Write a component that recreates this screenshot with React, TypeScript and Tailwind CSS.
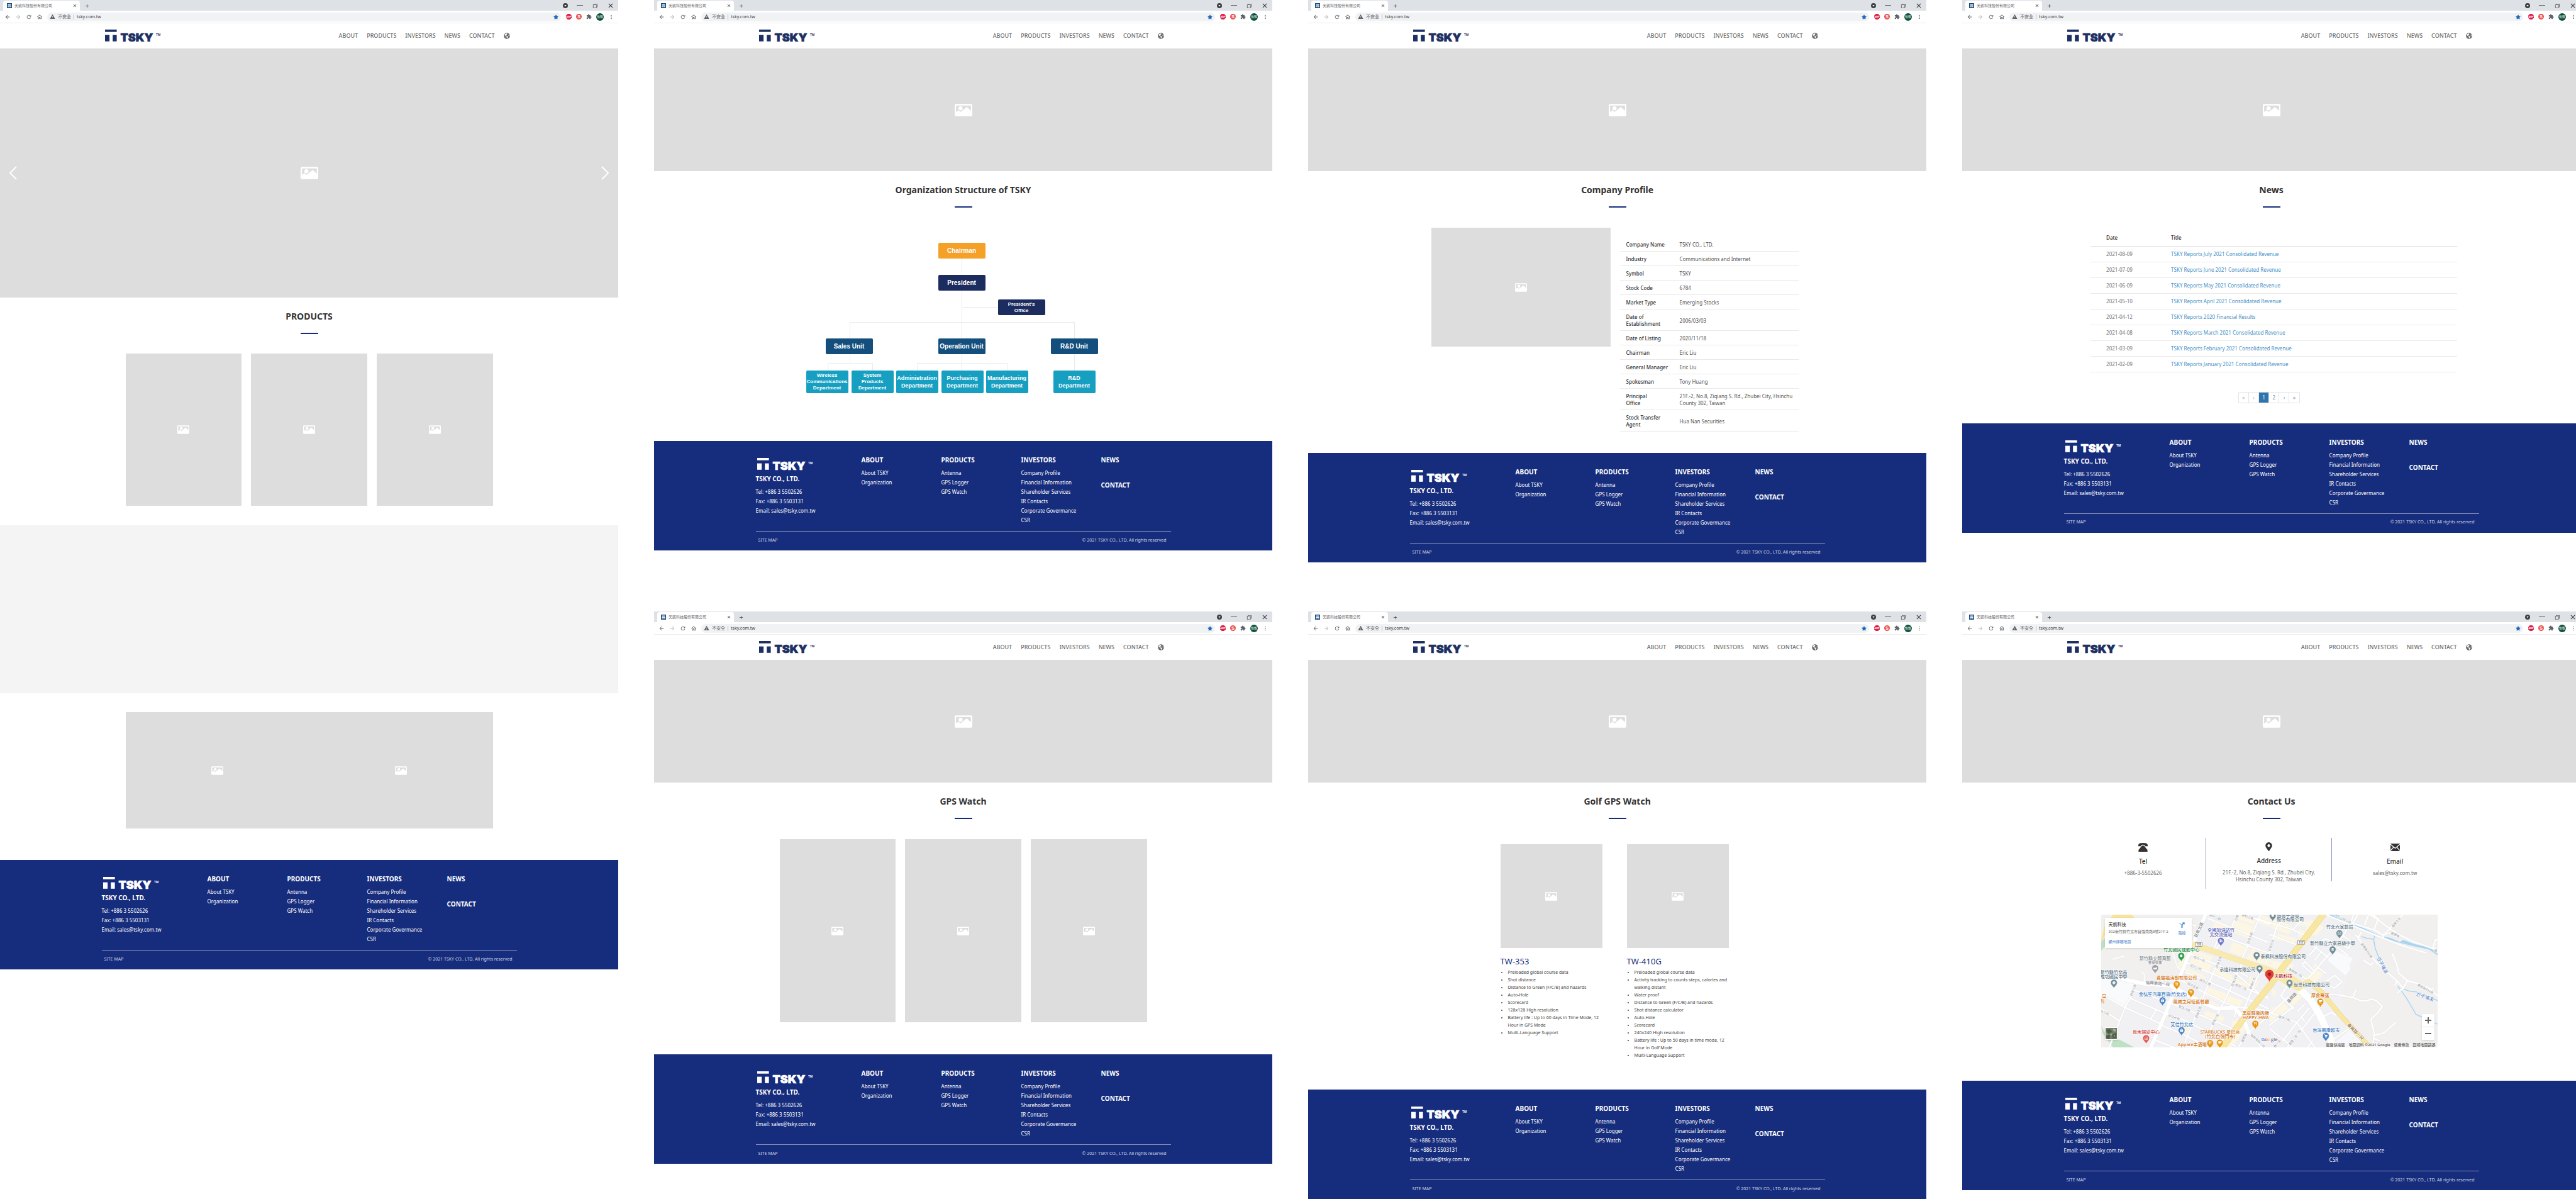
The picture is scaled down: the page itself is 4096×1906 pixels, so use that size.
import type { ReactNode } from "react";
import { FaGlobeAmericas, FaMapMarkerAlt, FaStar } from "react-icons/fa";
import {
  MdArrowBack,
  MdArrowForward,
  MdClose,
  MdExtension,
  MdMoreVert,
  MdOutlineHome,
  MdRefresh,
  MdWarning,
  MdAdd,
} from "react-icons/md";
import { VscChromeRestore } from "react-icons/vsc";

/* ---------- shared drawings ---------- */

function ImageGlyph({ className }: { className: string }) {
  return (
    <svg viewBox="0 0 64 45" className={className} aria-hidden="true">
      <rect width="64" height="45" rx="5" fill="#fff" />
      <path d="M5 8Q5 6 7 6H57Q59 6 59 8V25L44 11L22 29L13 23L5 30Z" fill="#ddd" />
      <circle cx="21" cy="16" r="7.5" fill="#fff" />
    </svg>
  );
}

function Placeholder({ className, large = false }: { className: string; large?: boolean }) {
  return (
    <div className={`flex items-center justify-center bg-[#ddd] ${className}`}>
      <ImageGlyph className={large ? "h-5 w-7" : "h-[14px] w-[19px]"} />
    </div>
  );
}

function Logo({ className }: { className: string }) {
  return (
    <svg viewBox="0 -4 92 28" className={`overflow-visible ${className}`} role="img" aria-label="TSKY">
      <g fill="currentColor">
        <rect x="0" y="0" width="18.6" height="3.7" />
        <rect x="0" y="8.6" width="7.1" height="10.2" />
        <rect x="12.2" y="8.6" width="6.4" height="10.2" />
        <text
          x="24.5"
          y="18.6"
          fontFamily="Inter, 'Liberation Sans', sans-serif"
          fontWeight="900"
          fontSize="18"
          stroke="currentColor"
          strokeWidth="0.7"
        >
          TSKY
        </text>
        <text x="81" y="10" fontFamily="'Liberation Sans', sans-serif" fontWeight="700" fontSize="5">
          TM
        </text>
      </g>
    </svg>
  );
}

/* ---------- browser window ---------- */

function Favicon() {
  return (
    <svg viewBox="0 0 16 16" className="size-2 shrink-0" aria-hidden="true">
      <rect width="16" height="16" fill="#174a7c" />
      <path d="M3 3H13V5.4H3ZM3 7H13V13H10.6V9.4H9V13H7V9.4H5.4V13H3Z" fill="#fff" />
    </svg>
  );
}

function BrowserBar() {
  return (
    <div className="text-[#5f6368]">
      <div className="flex h-[17px] items-end bg-[#dee1e6]">
        <div className="ml-[5px] flex h-4 w-[122px] items-center rounded-t-[4px] bg-white pr-1 pl-[6px]">
          <Favicon />
          <span className="ml-1 text-[6px] leading-4">天凱科技股份有限公司</span>
          <button type="button" aria-label="Close tab" className="ml-auto text-[#3c4043]">
            <MdClose className="size-2" />
          </button>
        </div>
        <button type="button" aria-label="New tab" className="flex h-4 w-[23px] items-center justify-center text-[#3c4043]">
          <MdAdd className="size-[9px]" />
        </button>
        <div className="ml-auto flex h-[17px] items-center text-[#333]">
          <button type="button" aria-label="Search tabs" className="mr-[14px]">
            <svg viewBox="0 0 16 16" className="size-2">
              <circle cx="8" cy="8" r="8" fill="#3c4043" />
              <path d="M4.6 6H11.4L8 10.8Z" fill="#fff" />
            </svg>
          </button>
          <button type="button" aria-label="Minimize" className="mr-[14px] flex h-2 w-[10px] items-center">
            <span className="h-px w-full bg-[#666]" />
          </button>
          <button type="button" aria-label="Restore" className="mr-[14px]">
            <VscChromeRestore className="size-[10px]" />
          </button>
          <button type="button" aria-label="Close" className="mr-[6px]">
            <MdClose className="size-3" />
          </button>
        </div>
      </div>
      <div className="flex h-5 items-center border-b border-[#ececec] bg-white">
        <div className="flex gap-[7px] pl-[7px]">
          <button type="button" aria-label="Back">
            <MdArrowBack className="size-[10px]" />
          </button>
          <button type="button" aria-label="Forward" className="text-[#b8babd]">
            <MdArrowForward className="size-[10px]" />
          </button>
          <button type="button" aria-label="Reload">
            <MdRefresh className="size-[10px]" />
          </button>
          <button type="button" aria-label="Home">
            <MdOutlineHome className="size-[10px]" />
          </button>
        </div>
        <div className="ml-[7px] flex h-[14px] flex-1 items-center rounded-full bg-[#f0f2f4] px-1">
          <MdWarning className="size-[9px]" />
          <span className="ml-1 text-[7px] leading-3">不安全</span>
          <span className="mx-1 h-2 w-px bg-[#bbb]" />
          <input
            aria-label="Address bar"
            defaultValue="tsky.com.tw"
            className="min-w-0 flex-1 bg-transparent text-[7px] leading-3 text-[#3c4043] outline-none"
          />
          <button type="button" aria-label="Bookmark" className="text-[#1f67b8]">
            <FaStar className="size-[8px]" />
          </button>
        </div>
        <div className="flex items-center gap-[7px] pr-[6px] pl-2">
          <svg viewBox="0 0 18 18" className="size-[9px] overflow-visible" aria-label="ABP" role="img">
            <path d="M5.3 0H12.7L18 5.3V12.7L12.7 18H5.3L0 12.7V5.3Z" fill="#e01f44" />
            <text x="9" y="12" textAnchor="middle" fontFamily="Liberation Sans" fontWeight="700" fontSize="8" fill="#fff">
              ABP
            </text>
          </svg>
          <svg viewBox="0 0 18 18" className="size-[9px] overflow-visible" aria-label="S" role="img">
            <circle cx="9" cy="9" r="9" fill="#ee4d4d" />
            <text x="9" y="14" textAnchor="middle" fontFamily="Liberation Sans" fontWeight="700" fontSize="14" fill="#fff">
              S
            </text>
          </svg>
          <MdExtension className="size-[9px]" />
          <span className="flex size-3 items-center justify-center rounded-full bg-[#0f4f3c] text-[5px] leading-none whitespace-nowrap text-white">
            怡甄
          </span>
          <button type="button" aria-label="Menu">
            <MdMoreVert className="size-[10px]" />
          </button>
        </div>
      </div>
    </div>
  );
}

const NAV = ["ABOUT", "PRODUCTS", "INVESTORS", "NEWS", "CONTACT"];

function SiteHeader() {
  return (
    <header className="mx-auto flex h-10 max-w-[660px] items-center justify-between pr-[11px] pl-[5px]">
      <a href="#home">
        <Logo className="h-7 w-[92px] text-[#1d3063]" />
      </a>
      <nav className="flex items-center gap-[14px] text-[9px] leading-3 font-medium text-[#6c6c6c]">
        {NAV.map((n) => (
          <a key={n} href={`#${n.toLowerCase()}`}>
            {n}
          </a>
        ))}
        <button type="button" aria-label="Language">
          <FaGlobeAmericas className="size-[10px]" />
        </button>
      </nav>
    </header>
  );
}

function FooterColumn({ title, links }: { title: string; links: string[] }) {
  return (
    <div>
      <h3 className="text-[10px] leading-[14px] font-bold">{title}</h3>
      <ul className="mt-[6px] text-[8px] leading-[15px]">
        {links.map((l) => (
          <li key={l}>
            <a href="#page">{l}</a>
          </li>
        ))}
      </ul>
    </div>
  );
}

function SiteFooter() {
  return (
    <footer className="bg-[#162c7c] pt-[23px] pb-[2px] text-white">
      <div className="mx-auto max-w-[660px]">
        <div className="grid grid-cols-[168px_127px_127px_127px_1fr]">
          <div>
            <Logo className="h-7 w-24" />
            <p className="mt-[2px] text-[10px] leading-[14px] font-bold">TSKY CO., LTD.</p>
            <div className="mt-[6px] text-[8px] leading-[15px]">
              <p>Tel: +886 3 5502626</p>
              <p>Fax: +886 3 5503131</p>
              <p>Email: sales@tsky.com.tw</p>
            </div>
          </div>
          <FooterColumn title="ABOUT" links={["About TSKY", "Organization"]} />
          <FooterColumn title="PRODUCTS" links={["Antenna", "GPS Logger", "GPS Watch"]} />
          <FooterColumn
            title="INVESTORS"
            links={[
              "Company Profile",
              "Financial Information",
              "Shareholder Services",
              "IR Contacts",
              "Corporate Govermance",
              "CSR",
            ]}
          />
          <div className="text-[10px] leading-[14px] font-bold">
            <h3>NEWS</h3>
            <h3 className="mt-[26px]">CONTACT</h3>
          </div>
        </div>
        <div className="mt-[10px] flex h-[29px] items-center justify-between border-t border-[#8a95bd] px-1 text-[7px] text-[#d0d5e5]">
          <a href="#sitemap">SITE MAP</a>
          <p className="pr-[3px]">© 2021 TSKY CO., LTD. All rights reserved</p>
        </div>
      </div>
    </footer>
  );
}

function Heading({ children }: { children: ReactNode }) {
  return (
    <div className="flex flex-col items-center pt-[19px]">
      <h2 className="text-[14px] leading-[21px] font-bold text-[#333]">{children}</h2>
      <div className="mt-4 h-[2px] w-[28px] bg-[#162c7c]" />
    </div>
  );
}

function Page({ title, children }: { title: string; children: ReactNode }) {
  return (
    <article className="bg-white">
      <BrowserBar />
      <SiteHeader />
      <Placeholder large className="h-[195px]" />
      <Heading>{title}</Heading>
      {children}
      <SiteFooter />
    </article>
  );
}

/* ---------- home ---------- */

function HomePage() {
  return (
    <article className="row-span-2 bg-white">
      <BrowserBar />
      <SiteHeader />
      <div className="flex h-[396px] items-center justify-between bg-[#ddd] px-[14px]">
        <button type="button" aria-label="Previous">
          <svg viewBox="0 0 13 22" className="h-[22px] w-[13px]" fill="none" stroke="#fff" strokeWidth="2">
            <path d="M12 1L2 11L12 21" />
          </svg>
        </button>
        <ImageGlyph className="h-5 w-7" />
        <button type="button" aria-label="Next">
          <svg viewBox="0 0 13 22" className="h-[22px] w-[13px]" fill="none" stroke="#fff" strokeWidth="2">
            <path d="M1 1L11 11L1 21" />
          </svg>
        </button>
      </div>
      <Heading>PRODUCTS</Heading>
      <div className="mx-auto mt-[31px] grid max-w-[584px] grid-cols-3 gap-[15px]">
        <Placeholder className="h-[242px]" />
        <Placeholder className="h-[242px]" />
        <Placeholder className="h-[242px]" />
      </div>
      <div className="mt-[31px] h-[267px] bg-[#f5f4f5]" />
      <div className="mx-auto mt-[30px] mb-[50px] grid max-w-[584px] grid-cols-2">
        <Placeholder className="h-[185px]" />
        <Placeholder className="h-[185px]" />
      </div>
      <SiteFooter />
    </article>
  );
}

/* ---------- organization ---------- */

const UNIT = "h-[25px] w-[75px] text-[10px] leading-3";
const OFFICE = "h-[25px] w-[75px] text-[8px] leading-[10px]";
const DEPT3 = "h-[36px] w-[67px] text-[8px] leading-[10px]";
const DEPT2 = "h-[36px] w-[67px] text-[9px] leading-3";

const NODES = [
  { lines: ["Chairman"], pos: "left-[210px] top-0", kind: UNIT, color: "bg-[#f5a027]" },
  { lines: ["President"], pos: "left-[210px] top-[51px]", kind: UNIT, color: "bg-[#1c2c5e]" },
  { lines: ["President’s", "Office"], pos: "left-[305px] top-[90px]", kind: OFFICE, color: "bg-[#1c2c5e]" },
  { lines: ["Sales Unit"], pos: "left-[31px] top-[152px]", kind: UNIT, color: "bg-[#134e7c]" },
  { lines: ["Operation Unit"], pos: "left-[210px] top-[152px]", kind: UNIT, color: "bg-[#134e7c]" },
  { lines: ["R&D Unit"], pos: "left-[389px] top-[152px]", kind: UNIT, color: "bg-[#134e7c]" },
  { lines: ["Wireless", "Communications", "Department"], pos: "left-0 top-[203px]", kind: DEPT3, color: "bg-[#179fc2]" },
  { lines: ["System", "Products", "Department"], pos: "left-[72px] top-[203px]", kind: DEPT3, color: "bg-[#179fc2]" },
  { lines: ["Administration", "Department"], pos: "left-[143px] top-[203px]", kind: DEPT2, color: "bg-[#179fc2]" },
  { lines: ["Purchasing", "Department"], pos: "left-[215px] top-[203px]", kind: DEPT2, color: "bg-[#179fc2]" },
  { lines: ["Manufacturing", "Department"], pos: "left-[286px] top-[203px]", kind: DEPT2, color: "bg-[#179fc2]" },
  { lines: ["R&D", "Department"], pos: "left-[393px] top-[203px]", kind: DEPT2, color: "bg-[#179fc2]" },
];

function OrgChart() {
  return (
    <div className="relative mx-auto mt-14 mb-[76px] h-[239px] w-[500px] font-['Liberation_Sans',sans-serif] font-bold text-white">
      <svg viewBox="0 0 500 239" className="absolute inset-0 h-full w-full" fill="none" stroke="#ebebeb" strokeWidth="1" aria-hidden="true">
        <path d="M247.5 20V210M247.5 102.5H310M69.5 155V126.5H426.5V155M69.5 170V191.5M34.5 210V191.5H105.5V210M176.5 210V191.5H319.5V210M426.5 170V210" />
      </svg>
      {NODES.map((n) => (
        <div
          key={n.lines.join(" ")}
          className={`absolute flex flex-col items-center justify-center rounded-[2px] whitespace-nowrap ${n.pos} ${n.kind} ${n.color}`}
        >
          {n.lines.map((l) => (
            <span key={l}>{l}</span>
          ))}
        </div>
      ))}
    </div>
  );
}

/* ---------- company profile ---------- */

const PROFILE: [string, string][] = [
  ["Company Name", "TSKY CO., LTD."],
  ["Industry", "Communications and Internet"],
  ["Symbol", "TSKY"],
  ["Stock Code", "6784"],
  ["Market Type", "Emerging Stocks"],
  ["Date of Establishment", "2006/03/03"],
  ["Date of Listing", "2020/11/18"],
  ["Chairman", "Eric Liu"],
  ["General Manager", "Eric Liu"],
  ["Spokesman", "Tony Huang"],
  ["Principal Office", "21F.-2, No.8, Ziqiang S. Rd., Zhubei City, Hsinchu County 302, Taiwan"],
  ["Stock Transfer Agent", "Hua Nan Securities"],
];

function Profile() {
  return (
    <div className="mx-auto mt-8 mb-[34px] flex max-w-[592px] items-start gap-[15px]">
      <Placeholder className="h-[189px] w-[285px]" />
      <table className="mt-[15px] w-[284px] table-fixed border-collapse text-[8px] leading-[11px]">
        <tbody>
          {PROFILE.map(([k, v]) => (
            <tr key={k} className="border-b border-[#eaeaea]">
              <th
                scope="row"
                className={`w-[85px] pt-[6px] pb-[5px] pl-[10px] text-left font-medium text-[#333] ${
                  k === "Principal Office" ? "pr-6" : "pr-2"
                }`}
              >
                {k}
              </th>
              <td className="pt-[6px] pb-[5px] pl-[10px] text-[#555]">{v}</td>
            </tr>
          ))}
        </tbody>
      </table>
    </div>
  );
}

/* ---------- news ---------- */

const NEWS = [
  ["2021-08-09", "TSKY Reports July 2021 Consolidated Revenue"],
  ["2021-07-09", "TSKY Reports June 2021 Consolidated Revenue"],
  ["2021-06-09", "TSKY Reports May 2021 Consolidated Revenue"],
  ["2021-05-10", "TSKY Reports April 2021 Consolidated Revenue"],
  ["2021-04-12", "TSKY Reports 2020 Financial Results"],
  ["2021-04-08", "TSKY Reports March 2021 Consolidated Revenue"],
  ["2021-03-09", "TSKY Reports February 2021 Consolidated Revenue"],
  ["2021-02-09", "TSKY Reports January 2021 Consolidated Revenue"],
];

const PAGES = [
  { label: "«", style: "text-[#aaa]" },
  { label: "‹", style: "text-[#aaa]" },
  { label: "1", style: "bg-[#2e75b0] text-white" },
  { label: "2", style: "text-[#5b8dbb]" },
  { label: "›", style: "text-[#5b8dbb]" },
  { label: "»", style: "text-[#5b8dbb]" },
];

function NewsList() {
  return (
    <div className="mx-auto mt-9 mb-8 max-w-[591px]">
      <div className="pl-2">
        <table className="w-full border-collapse text-left text-[8px] leading-3">
          <thead>
            <tr className="h-[25px] border-b border-[#ddd] text-[#222]">
              <th scope="col" className="w-[128px] pl-[25px] font-medium">
                Date
              </th>
              <th scope="col" className="font-medium">
                Title
              </th>
            </tr>
          </thead>
          <tbody>
            {NEWS.map(([d, t]) => (
              <tr key={d} className="h-[25px] border-b border-[#eaeaea]">
                <td className="pl-[25px] text-[#777]">{d}</td>
                <td>
                  <a href="#news" className="text-[#3f8fc6]">
                    {t}
                  </a>
                </td>
              </tr>
            ))}
          </tbody>
        </table>
      </div>
      <div className="mt-[31px] flex justify-center pr-2">
        <nav aria-label="Pages" className="flex h-[18px] w-[98px] overflow-hidden rounded-[2px] border border-[#e5e5e5] text-[8px]">
          {PAGES.map((p) => (
            <button key={p.label} type="button" className={`flex-1 border-r border-[#e5e5e5] last:border-r-0 ${p.style}`}>
              {p.label}
            </button>
          ))}
        </nav>
      </div>
    </div>
  );
}

/* ---------- watches ---------- */

function WatchGrid() {
  return (
    <div className="mx-auto mt-8 mb-[51px] grid max-w-[584px] grid-cols-3 gap-[15px]">
      <Placeholder className="h-[291px]" />
      <Placeholder className="h-[291px]" />
      <Placeholder className="h-[291px]" />
    </div>
  );
}

const WATCHES = [
  {
    name: "TW-353",
    features: [
      "Preloaded global course data",
      "Shot distance",
      "Distance to Green (F/C/B) and hazards",
      "Auto-Hole",
      "Scorecard",
      "128x128 High resolution",
      "Battery life : Up to 60 days in Time Mode, 12 Hour in GPS Mode",
      "Multi-Language Support",
    ],
  },
  {
    name: "TW-410G",
    features: [
      "Preloaded global course data",
      "Activity tracking to counts steps, calories and walking distant",
      "Water proof",
      "Distance to Green (F/C/B) and hazards",
      "Shot distance calculator",
      "Auto-Hole",
      "Scorecard",
      "240x240 High resolution",
      "Battery life : Up to 50 days in time mode, 12 Hour in Golf Mode",
      "Multi-Language Support",
    ],
  },
];

function GolfWatches() {
  return (
    <div className="mt-10 mb-12 flex justify-center gap-[33px] pr-[3px]">
      {WATCHES.map((w) => (
        <section key={w.name} className="w-[168px]">
          <Placeholder className="mr-[6px] h-[165px]" />
          <h3 className="mt-[11px] text-[13px] leading-5 text-[#162c7c]">{w.name}</h3>
          <ul className="mt-[2px] list-disc pl-[12px] text-[7px] leading-3 text-[#444]">
            {w.features.map((f) => (
              <li key={f}>{f}</li>
            ))}
          </ul>
        </section>
      ))}
    </div>
  );
}

/* ---------- contact ---------- */

function PhoneGlyph() {
  return (
    <svg viewBox="0 0 37 46" preserveAspectRatio="none" className="h-[14px] w-[15px]" fill="#333" aria-hidden="true">
      <path d="M0 14Q0 2 10 1Q18 -1 27 1Q37 2 37 14V17H27V11Q18 7 10 11V17H0Z" />
      <path d="M12 14H25V19L36 36V46H1V36L12 19Z" />
    </svg>
  );
}

function MailGlyph() {
  return (
    <svg viewBox="0 0 36 40" preserveAspectRatio="none" className="h-3 w-[15px]" aria-hidden="true">
      <rect width="36" height="40" fill="#333" />
      <path d="M0 4L18 25L36 4M0 37L12 19M36 37L24 19" fill="none" stroke="#fff" strokeWidth="3.5" />
    </svg>
  );
}

function ContactItem({ icon, title, className, children }: { icon: ReactNode; title: string; className: string; children: ReactNode }) {
  return (
    <div className={`flex flex-col items-center pt-[7px] text-center ${className}`}>
      <div className="flex h-[15px] items-center text-[#333]">{icon}</div>
      <h3 className="mt-2 text-[10px] leading-[14px] font-medium text-[#333]">{title}</h3>
      <p className="mt-[6px] text-[8px] leading-[11px] text-[#666]">{children}</p>
    </div>
  );
}

type Glyph = "dot" | "food" | "bag" | "cap" | "cup" | "gas" | "cart" | "mail" | "plus" | "gym";

function PinGlyph({ kind }: { kind: Glyph }) {
  switch (kind) {
    case "dot":
      return <circle r="12" fill="#fff" />;
    case "food":
      return <path d="M-11 -15V-4Q-11 0 -6 0V15M-6 -15V0M-1 -15V-4Q-1 0 -6 0M9 15V-15Q4 -10 5 2H9" fill="none" stroke="#fff" strokeWidth="4" />;
    case "bag":
      return (
        <g>
          <path d="M-14 -6H14V15H-14Z" fill="#fff" />
          <path d="M-6 -6Q-6 -15 0 -15Q6 -15 6 -6" fill="none" stroke="#fff" strokeWidth="4" />
          <path d="M-5 1Q0 8 5 1" fill="none" stroke="#4f86c6" strokeWidth="3" />
        </g>
      );
    case "cap":
      return <path d="M-18 -4L0 -13L18 -4L0 5ZM-11 3L0 9L11 3V11L0 16L-11 11Z" fill="#fff" />;
    case "cup":
      return <path d="M-14 -12H17V0H9Q8 6 3 7H-7Q-14 6 -14 -2ZM-16 11H12V15H-16Z" fill="#fff" />;
    case "gas":
      return (
        <g fill="#fff">
          <path d="M-11 -15H5V15H-11ZM8 -8L14 -2V10H8Z" />
          <rect x="-7" y="-11" width="8" height="9" fill="#6f78c4" />
        </g>
      );
    case "cart":
      return (
        <g fill="#fff">
          <path d="M-17 -14H-10L-8 -10H16L10 4H-6L-12 -10H-17ZM-7 6H11V9H-7Z" />
          <circle cx="-5" cy="13" r="3" />
          <circle cx="8" cy="13" r="3" />
        </g>
      );
    case "mail":
      return <path d="M-15 -10H15V11H-15ZM-15 -10L0 3L15 -10M-15 11L-4 0M15 11L4 0" fill="none" stroke="#fff" strokeWidth="3" />;
    case "plus":
      return <path d="M-13 14V-6L0 -15L13 -6V14ZM-7 3H7M0 -4V10" fill="none" stroke="#fff" strokeWidth="4" />;
    case "gym":
      return <path d="M-16 -6L-6 0L6 -4L12 -12L16 -4V12H-16Z" fill="#fff" />;
  }
}

/* Pin drawn around its head's centre; the tip is 55 units lower. */
function Pin({ x, y, color, kind }: { x: number; y: number; color: string; kind: Glyph }) {
  return (
    <g transform={`translate(${x} ${y})`}>
      <path d="M0 55C-4 32 -30 26 -30 0A30 30 0 0 1 30 0C30 26 4 32 0 55Z" fill={color} stroke="#fff" strokeWidth="2" />
      <PinGlyph kind={kind} />
    </g>
  );
}

const SLATE = "#728e99";
const ORANGE = "#e8940f";
const BLUE = "#4f86c6";

const PINS: { x: number; y: number; color: string; kind: Glyph }[] = [
  { x: 753, y: 398, color: "#2c9f4b", kind: "dot" },
  { x: 510, y: 512, color: "#9b9fa3", kind: "gym" },
  { x: 126, y: 648, color: SLATE, kind: "cap" },
  { x: 711, y: 662, color: ORANGE, kind: "food" },
  { x: 843, y: 736, color: ORANGE, kind: "food" },
  { x: 579, y: 812, color: BLUE, kind: "bag" },
  { x: 756, y: 1090, color: BLUE, kind: "bag" },
  { x: 426, y: 1165, color: "#e2554f", kind: "plus" },
  { x: 1022, y: 1210, color: ORANGE, kind: "food" },
  { x: 1112, y: 1206, color: ORANGE, kind: "cup" },
  { x: 1443, y: 1030, color: ORANGE, kind: "food" },
  { x: 1122, y: 257, color: "#6f78c4", kind: "gas" },
  { x: 1455, y: 392, color: SLATE, kind: "dot" },
  { x: 1482, y: 515, color: SLATE, kind: "dot" },
  { x: 1605, y: 24, color: SLATE, kind: "dot" },
  { x: 1761, y: 650, color: SLATE, kind: "dot" },
  { x: 2226, y: 187, color: SLATE, kind: "mail" },
  { x: 2163, y: 338, color: SLATE, kind: "cap" },
  { x: 2049, y: 824, color: ORANGE, kind: "cup" },
  { x: 2100, y: 1144, color: BLUE, kind: "cart" },
];

const C_SLATE = "#5b7482";
const C_ORANGE = "#d2710f";
const C_BLUE = "#3c7abf";

const PLACES: { t: string; x: number; y: number; c: string; s?: number }[] = [
  { t: "竹北國民運動中心", x: 755, y: 356, c: "#2a8f4c" },
  { t: "新竹縣立體育館", x: 509, y: 437, c: "#80868b" },
  { t: "暫停營業", x: 509, y: 472, c: "#80868b", s: 32 },
  { t: "新竹縣竹北市", x: 124, y: 563, c: C_SLATE },
  { t: "成功國民中學", x: 124, y: 605, c: C_SLATE },
  { t: "黃駿福活蝦有限公司", x: 710, y: 620, c: C_ORANGE },
  { t: "金弘笙汽車百貨(竹北店)", x: 580, y: 770, c: C_BLUE },
  { t: "風城之月懷舊餐廳", x: 845, y: 839, c: C_ORANGE },
  { t: "早", x: 36, y: 790, c: C_ORANGE },
  { t: "包", x: 18, y: 833, c: C_ORANGE },
  { t: "艾佳竹北店", x: 758, y: 1049, c: C_BLUE },
  { t: "育禾婦幼中心", x: 425, y: 1123, c: "#d2483f" },
  { t: "STARBUCKS 星巴克", x: 1115, y: 1121, c: C_ORANGE },
  { t: "(竹北自強門市)", x: 1115, y: 1163, c: C_ORANGE },
  { t: "Appare串酒場", x: 856, y: 1241, c: C_ORANGE },
  { t: "黑皮驊魯肉飯", x: 1446, y: 947, c: C_ORANGE },
  { t: "HAPPY-HWA", x: 1446, y: 988, c: C_ORANGE },
  { t: "全國加油站竹", x: 1123, y: 174, c: "#5560b8" },
  { t: "北交流道站", x: 1123, y: 215, c: "#5560b8" },
  { t: "泰枫科技股份有限公司", x: 1702, y: 422, c: C_SLATE },
  { t: "承達科技有限公司", x: 1277, y: 545, c: C_SLATE },
  { t: "儀鼎半導體", x: 1748, y: 34, c: C_SLATE },
  { t: "股份有限公司", x: 1768, y: 74, c: C_SLATE },
  { t: "天凱科技", x: 1703, y: 599, c: "#b31419" },
  { t: "世恩科技有限公司", x: 1967, y: 680, c: C_SLATE },
  { t: "竹北六家郵局", x: 2228, y: 146, c: C_SLATE },
  { t: "新竹縣立六家高級中學", x: 2162, y: 296, c: C_SLATE },
  { t: "厚食聚落", x: 2047, y: 782, c: C_ORANGE },
  { t: "台灣楓康超市", x: 2102, y: 1103, c: C_BLUE },
];

const STREETS: { t: string; x: number; y: number; r: number; c?: string; s?: number }[] = [
  { t: "莊敬北路", x: 915, y: 155, r: -65, s: 38, c: "#6b6f73" },
  { t: "福興東路一段", x: 535, y: 655, r: 5, s: 38, c: "#6b6f73" },
  { t: "嘉興路", x: 1782, y: 788, r: -49, s: 38, c: "#6b6f73" },
  { t: "東興路一段", x: 2376, y: 1105, r: 44, s: 40, c: "#85571d" },
  { t: "豆子埔溪", x: 2628, y: 485, r: 62, s: 42, c: "#4779c4" },
  { t: "豆子埔溪", x: 3024, y: 778, r: 20, s: 42, c: "#4779c4" },
  { t: "成功一街", x: 920, y: 427, r: 22 },
  { t: "成功二街", x: 888, y: 505, r: 22 },
  { t: "成功三路", x: 975, y: 640, r: 26 },
  { t: "成功五街", x: 862, y: 676, r: 26 },
  { t: "成功六街", x: 782, y: 888, r: 24 },
  { t: "成功七街", x: 685, y: 970, r: 20 },
  { t: "成功二街", x: 1308, y: 686, r: 24 },
  { t: "功九街", x: 40, y: 925, r: 24 },
  { t: "自強三路", x: 303, y: 717, r: -68 },
  { t: "自強五路", x: 1100, y: 455, r: -68 },
  { t: "自強五路", x: 910, y: 922, r: -68 },
  { t: "自強六街", x: 1245, y: 628, r: -68 },
  { t: "自強六街", x: 1068, y: 990, r: -62 },
  { t: "自強七街", x: 1414, y: 652, r: -68 },
  { t: "莊敬五街", x: 1393, y: 230, r: -72 },
  { t: "莊敬", x: 1268, y: 44, r: -68 },
  { t: "莊敬六街", x: 1590, y: 300, r: -70 },
  { t: "勝利二路", x: 1068, y: 36, r: 22 },
  { t: "勝利三街", x: 1372, y: 34, r: 18 },
  { t: "勝利八街二段", x: 2258, y: 50, r: 28 },
  { t: "嘉興五街", x: 2754, y: 85, r: -50 },
  { t: "蓮華巷", x: 2746, y: 200, r: 26 },
  { t: "蓮", x: 3122, y: 350, r: 10 },
  { t: "嘉興路394巷", x: 2480, y: 348, r: 54 },
  { t: "嘉興路394巷", x: 3028, y: 705, r: 30 },
  { t: "東興路一段", x: 1818, y: 555, r: 30 },
  { t: "復興一街", x: 1714, y: 980, r: 20 },
  { t: "嘉豐二街一段", x: 1810, y: 1158, r: -54 },
  { t: "豐一街", x: 1646, y: 1215, r: -50 },
  { t: "嘉興路", x: 1336, y: 1162, r: -62 },
  { t: "福興東路二段", x: 1466, y: 1188, r: 42 },
];

const MINOR_ROADS =
  "M845 385L1240 545L1490 760L1566 790M815 465L1330 690L1560 790M790 550L1130 690L1566 890M720 610L930 720L1240 870L1578 910M640 835L880 930L1300 1105M610 930L820 1015L1260 1240M560 1040L770 1130L1010 1253M500 1180L690 1253M280 795L640 950M310 715L650 840M70 790L230 880L560 1030M7 890L170 1000M520 900L470 985M230 880L80 1253M340 660L230 880M1130 375L1000 680L870 1000L770 1253M1310 480L1200 730L1090 940L950 1253M1480 560L1380 790L1320 940M1000 50L1200 130L1560 270M1180 230L1490 345L1578 375M1270 13L1190 220L1070 340M1490 13L1400 240L1320 420M1060 330L1120 180M1460 50L1570 90M1330 13L1578 100M1578 90L1780 150L1900 205M1740 13L1640 130L1540 470M1820 60L1970 120M1578 200L1840 300M1578 370L1730 440M1860 85L1790 155M1350 510Q1290 510 1310 560L1370 590M1738 510L1930 620M1930 620L2080 440L2190 310L2320 120L2360 13M1880 480L1905 450L1995 545M1885 490L1975 565M1950 390L2070 250Q2100 230 2120 250L2150 260M1990 310L2120 410M2050 370L2000 435M2030 510L2100 560M2210 320L2310 400M2260 210L2340 270L2310 330L2230 280M2110 630L2180 580L2250 640L2180 700L2110 660M2090 700L2060 720M1740 680L1680 770L1740 830L1800 890M2040 800Q2120 740 2200 760L2350 785L2430 820L2490 815L2520 800L2570 815L2625 870L2590 920L2520 990L2550 1120L2535 1253M2350 785L2380 720M2550 1140L2640 1115L2750 1020M2550 1170L2605 1190M1990 940L1740 1253M1945 885L1830 1020L1700 1190M1500 900L1650 950L1830 1020L2000 1253M1578 1080L1720 1190L1790 1253M1975 1190L1930 1253M2070 970L2150 925L2190 950M2180 1170L2320 1070M1578 1040L1800 870M1840 910L1900 850M1900 1010L1870 960M1380 1110L1280 1253M1380 1110L1500 1253M1380 1110L1520 1000L1750 780M1270 900L1245 965";

const EAST_ROADS =
  "M2110 20L2400 140L2700 260L2830 310L3030 370M2330 90L2560 160L2620 200L2740 180M2540 13L2620 90L2760 190L2900 260L3100 330L3140 340M2510 13L2600 70M2620 230L2690 150L2820 13M2400 13L2350 90M2500 13L2460 110M2550 150L2590 50M2430 180L2400 230L2378 205M2400 230L2560 450L2770 640L2820 700L2770 740M2820 700L2860 630L2780 560L2770 520L2760 480L2720 380M2860 630L2970 660L3060 700L3140 770M2540 460L2520 485L2450 440M3100 700L3060 720M3095 330L3120 250L3140 250M2760 640L2745 670";

function MapDrawing() {
  return (
    <svg viewBox="7 13 3134 1240" preserveAspectRatio="xMidYMid slice" className="h-full w-full" role="img" aria-label="Map around the office">
      <rect x="0" y="0" width="3160" height="1270" fill="#f1f0ef" />
      <path d="M960 0H2080L2400 260L2440 400L2300 560L2250 830L2340 1100L2500 1270H130L230 880L300 640L680 690L850 330Z" fill="#f1f1f4" />
      <path d="M0 590L340 650L230 870L0 770Z" fill="#f8fafc" />
      <path d="M2190 350L2348 420L2318 490L2330 520L2283 580L2115 440Z" fill="#f8fafc" />
      <path d="M2180 1210L2330 1080L2500 1253H2200Z" fill="#f7f8fc" />
      <g fill="#fcf6e2">
        <path d="M1050 60L1230 130L1170 270L1000 210L1060 110ZM1240 60L1440 130L1390 240L1210 170ZM1490 20L1578 50V130L1460 90ZM1300 20L1450 70L1430 110L1280 60Z" />
        <path d="M1230 270L1380 320L1340 410L1200 360ZM1410 330L1578 390V500L1360 430Z" />
        <path d="M1590 50L1790 120L1760 200L1590 140ZM1800 50L1990 70L1960 140L1830 110ZM1850 150L1970 200L1940 250L1840 220ZM1640 190L1830 240L1800 290L1600 240ZM1580 440L1740 470L1700 530L1578 500ZM1950 60L2080 130L2010 210L1900 190Z" />
        <path d="M870 340L1050 410L1020 460L850 380ZM850 410L1040 480L1000 570L820 480ZM1060 510L1230 580L1210 640L1030 560ZM790 500L980 590L960 640L770 550ZM1230 600L1430 680L1410 740L1190 640ZM760 360L800 380L770 530L720 510Z" />
        <path d="M1000 690L1180 750L1150 840L960 760ZM1180 760L1330 820L1290 880L1160 850ZM930 780L1110 860L1090 900L910 830ZM980 910L1160 970L1130 1020L960 950ZM1270 980L1380 1050L1220 1253H1150ZM780 1050L860 1070L800 1160L770 1120ZM1390 580L1480 640L1440 710L1380 690ZM1230 1000L1300 1010L1260 1080L1230 1060Z" />
        <path d="M1690 600L1780 560L1820 640L1700 690ZM1850 660L1990 530L2080 560L1960 700ZM1980 510L2000 470L2040 500L2010 550ZM1740 790L1860 720L1890 770L1780 880ZM1578 900L1700 830L1760 890L1640 970L1578 1050ZM1590 700L1640 730L1610 790Z" />
        <path d="M1740 470L1810 480L1760 540Z" />
      </g>
      <path d="M7 1050L60 1150L180 1180L320 1253H120L20 1120Z" fill="#bfe0c4" />
      <path d="M7 265L45 230V310L7 350Z" fill="#bfe0c4" />
      <path d="M7 240L40 120L120 13H290L330 60H70L45 200L7 270Z" fill="#f9e39a" />
      <path d="M2115 13H2190L2330 90L2420 125L2580 200L2620 215L2700 230L2790 270L2820 250L2930 290L3070 320L3141 380V395L3060 340L2920 310L2760 270L2640 230L2560 200L2380 140L2250 85Z" fill="#a9d5f3" />
      <path d="M2430 218L2480 235L2545 245L2560 200M2545 245L2560 330L2620 480M2770 680L2850 790L2940 945L3141 1035M2820 705L2870 725L2950 735L3141 815" fill="none" stroke="#a9d5f3" strokeWidth="9" />
      <g fill="none" strokeLinejoin="round" strokeLinecap="round">
        <g stroke="#e3e4e8">
          <path d={MINOR_ROADS} strokeWidth="20" />
          <path d={EAST_ROADS} strokeWidth="18" />
          <path d="M985 0L830 370L700 690L610 930L465 1260" strokeWidth="40" />
          <path d="M0 540L140 590L250 625L420 660L650 675L900 810L1080 890L1250 880L1330 980L1380 1110" strokeWidth="44" />
          <path d="M1860 710L1960 810L2050 960L2180 1260" strokeWidth="74" />
        </g>
        <g stroke="#fff">
          <path d={MINOR_ROADS} strokeWidth="14" />
          <path d={EAST_ROADS} strokeWidth="14" />
          <path d="M985 0L830 370L700 690L610 930L465 1260" strokeWidth="34" />
          <path d="M0 540L140 590L250 625L420 660L650 675L900 810L1080 890L1250 880L1330 980L1380 1110" strokeWidth="38" />
          <path d="M1860 710L1960 810L2050 960L2180 1260" strokeWidth="68" />
          <path d="M800 90L890 120M110 430L220 400M670 350L715 500L750 530M380 545L410 570V640" strokeWidth="8" />
        </g>
        <g strokeLinecap="butt">
          <path d="M855 290L1250 425L1578 535L1860 690" stroke="#efd98a" strokeWidth="54" />
          <path d="M2085 0L1888 260L1688 520L1590 660L1350 960L1130 1260" stroke="#efd27a" strokeWidth="58" />
          <path d="M1925 630L2060 735L2160 860L2270 990L2510 1250" stroke="#efd27a" strokeWidth="46" />
          <path d="M855 290L1250 425L1578 535L1860 690" stroke="#f8eaae" strokeWidth="50" />
          <path d="M2085 0L1888 260L1688 520L1590 660L1350 960L1130 1260" stroke="#f8e7a3" strokeWidth="52" />
          <path d="M1925 630L2060 735L2160 860L2270 990L2510 1250" stroke="#f8e7a3" strokeWidth="40" />
          <path d="M1640 520L1760 560L1880 640L1930 610L1960 650L1850 730L1740 680L1620 600Z" fill="#f8e9aa" />
        </g>
      </g>
      <g textAnchor="middle" fontFamily="'Noto Sans','Noto Sans CJK TC',sans-serif" stroke="#fff" strokeWidth="7" strokeLinejoin="round" paintOrder="stroke">
        {STREETS.map((s, i) => (
          <text
            key={i}
            transform={`translate(${s.x} ${s.y}) rotate(${s.r})`}
            dominantBaseline="central"
            fontSize={s.s ?? 29}
            fill={s.c ?? "#9b9ea2"}
          >
            {s.t}
          </text>
        ))}
        {PLACES.map((p, i) => (
          <text key={i} x={p.x} y={p.y} fontSize={p.s ?? 42} fill={p.c} fontWeight="500">
            {p.t}
          </text>
        ))}
      </g>
      {PINS.map((p, i) => (
        <Pin key={i} {...p} />
      ))}
      <g transform="translate(1574 568)">
        <path d="M0 72C-6 40 -40 34 -40 0A40 40 0 0 1 40 0C40 34 6 40 0 72Z" fill="#e0403a" />
        <circle r="16" fill="#a81c1c" />
      </g>
      {[
        { t: "120", x: 884, y: 276 },
        { t: "117", x: 1836, y: 257 },
      ].map((b) => (
        <g key={b.t}>
          <rect x={b.x} y={b.y} width="64" height="34" fill="#fff" stroke="#777" strokeWidth="4" />
          <text x={b.x + 33} y={b.y + 27} textAnchor="middle" fontFamily="'Noto Sans',sans-serif" fontWeight="600" fontSize="26" fill="#555">
            {b.t}
          </text>
        </g>
      ))}
      <text x="1498" y="1190" fontFamily="'Open Sans',sans-serif" fontWeight="600" fontSize="46" stroke="#fff" strokeWidth="5" paintOrder="stroke">
        <tspan fill="#4285f4">G</tspan>
        <tspan fill="#ea4335">o</tspan>
        <tspan fill="#fbbc05">o</tspan>
        <tspan fill="#4285f4">g</tspan>
        <tspan fill="#34a853">l</tspan>
        <tspan fill="#ea4335">e</tspan>
      </text>
    </svg>
  );
}

function OfficeMap() {
  return (
    <div className="relative mx-auto mt-[41px] mb-[53px] h-[211px] max-w-[535px] overflow-hidden bg-[#f1f0ef]">
      <MapDrawing />
      <div className="absolute top-[5px] left-[6px] flex h-12 w-[138px] justify-between bg-white py-[5px] pr-[9px] pl-[6px] text-[6px] whitespace-nowrap shadow">
        <div>
          <p className="text-[7px] leading-[11px] text-[#222]">天凱科技</p>
          <p className="leading-[12px] text-[#666]">302新竹縣竹北市自強南路8號21F-2</p>
          <a href="#map" className="mt-1 block leading-[12px] text-[#3b78c9]">
            顯示詳細地圖
          </a>
        </div>
        <button type="button" className="flex flex-col items-center text-[#4a86d0]">
          <svg viewBox="0 0 56 56" className="mt-[2px] size-[9px]" aria-hidden="true">
            <path d="M28 56V36Q28 26 36 18L44 10" fill="none" stroke="#4a86d0" strokeWidth="12" />
            <path d="M26 30L4 8" stroke="#a5c3ea" strokeWidth="11" />
            <path d="M32 2H54V24Z" fill="#4a86d0" />
          </svg>
          <span className="mt-1 leading-[9px]">路線</span>
        </button>
      </div>
      <svg viewBox="0 0 40 40" className="absolute bottom-[12px] left-[6px] size-5 border border-white shadow" aria-label="Satellite view" role="img">
        <rect width="40" height="40" fill="#6f7d66" />
        <path d="M0 8L14 4L24 14L10 20ZM22 24L38 18V34L26 38ZM2 28L16 24L14 38H4Z" fill="#4f5d48" />
        <path d="M26 2L38 6L34 14L26 10ZM14 22L24 20L22 28ZM2 18L8 22L4 26ZM28 28L34 26L32 32Z" fill="#a3aa94" />
      </svg>
      <div className="absolute right-[5px] bottom-3 flex h-[41px] w-5 flex-col divide-y divide-[#e6e6e6] bg-white text-[#666] shadow">
        <button type="button" aria-label="Zoom in" className="flex flex-1 items-center justify-center">
          <svg viewBox="0 0 10 10" className="size-[10px]" stroke="#666" strokeWidth="2">
            <path d="M5 0V10M0 5H10" />
          </svg>
        </button>
        <button type="button" aria-label="Zoom out" className="flex flex-1 items-center justify-center">
          <svg viewBox="0 0 10 10" className="size-[10px]" stroke="#666" strokeWidth="2">
            <path d="M0 5H10" />
          </svg>
        </button>
      </div>
      <div className="absolute right-0 bottom-0 flex gap-[6px] bg-[#f5f5f5]/80 pr-[3px] text-[6px] leading-[7px] whitespace-nowrap text-[#333]">
        <button type="button">鍵盤快速鍵</button>
        <span>地圖資料 ©2021 Google</span>
        <a href="#terms">使用條款</a>
        <a href="#report">回報地圖錯誤</a>
      </div>
    </div>
  );
}

function Contact() {
  return (
    <div className="pr-[7px]">
      <div className="mx-auto mt-[30px] grid max-w-[600px] grid-cols-3 items-start">
        <ContactItem icon={<PhoneGlyph />} title="Tel" className="h-[81px] border-r border-[#8a97c8]">
          +886-3-5502626
        </ContactItem>
        <ContactItem
          icon={<FaMapMarkerAlt className="h-[14px] w-[11px]" />}
          title="Address"
          className="h-[69px] border-r border-[#8a97c8]"
        >
          21F.-2, No.8, Ziqiang S. Rd., Zhubei City,
          <br />
          Hsinchu County 302, Taiwan
        </ContactItem>
        <ContactItem icon={<MailGlyph />} title="Email" className="h-[69px]">
          sales@tsky.com.tw
        </ContactItem>
      </div>
      <OfficeMap />
    </div>
  );
}

export default function App() {
  return (
    <main className="min-h-screen overflow-hidden bg-white font-['Noto_Sans','Noto_Sans_CJK_TC',sans-serif]">
      <div className="grid grid-cols-[repeat(4,24%)] items-start gap-x-[57px] gap-y-[78px]">
        <HomePage />
        <Page title="Organization Structure of TSKY">
          <OrgChart />
        </Page>
        <Page title="Company Profile">
          <Profile />
        </Page>
        <Page title="News">
          <NewsList />
        </Page>
        <Page title="GPS Watch">
          <WatchGrid />
        </Page>
        <Page title="Golf GPS Watch">
          <GolfWatches />
        </Page>
        <Page title="Contact Us">
          <Contact />
        </Page>
      </div>
    </main>
  );
}
